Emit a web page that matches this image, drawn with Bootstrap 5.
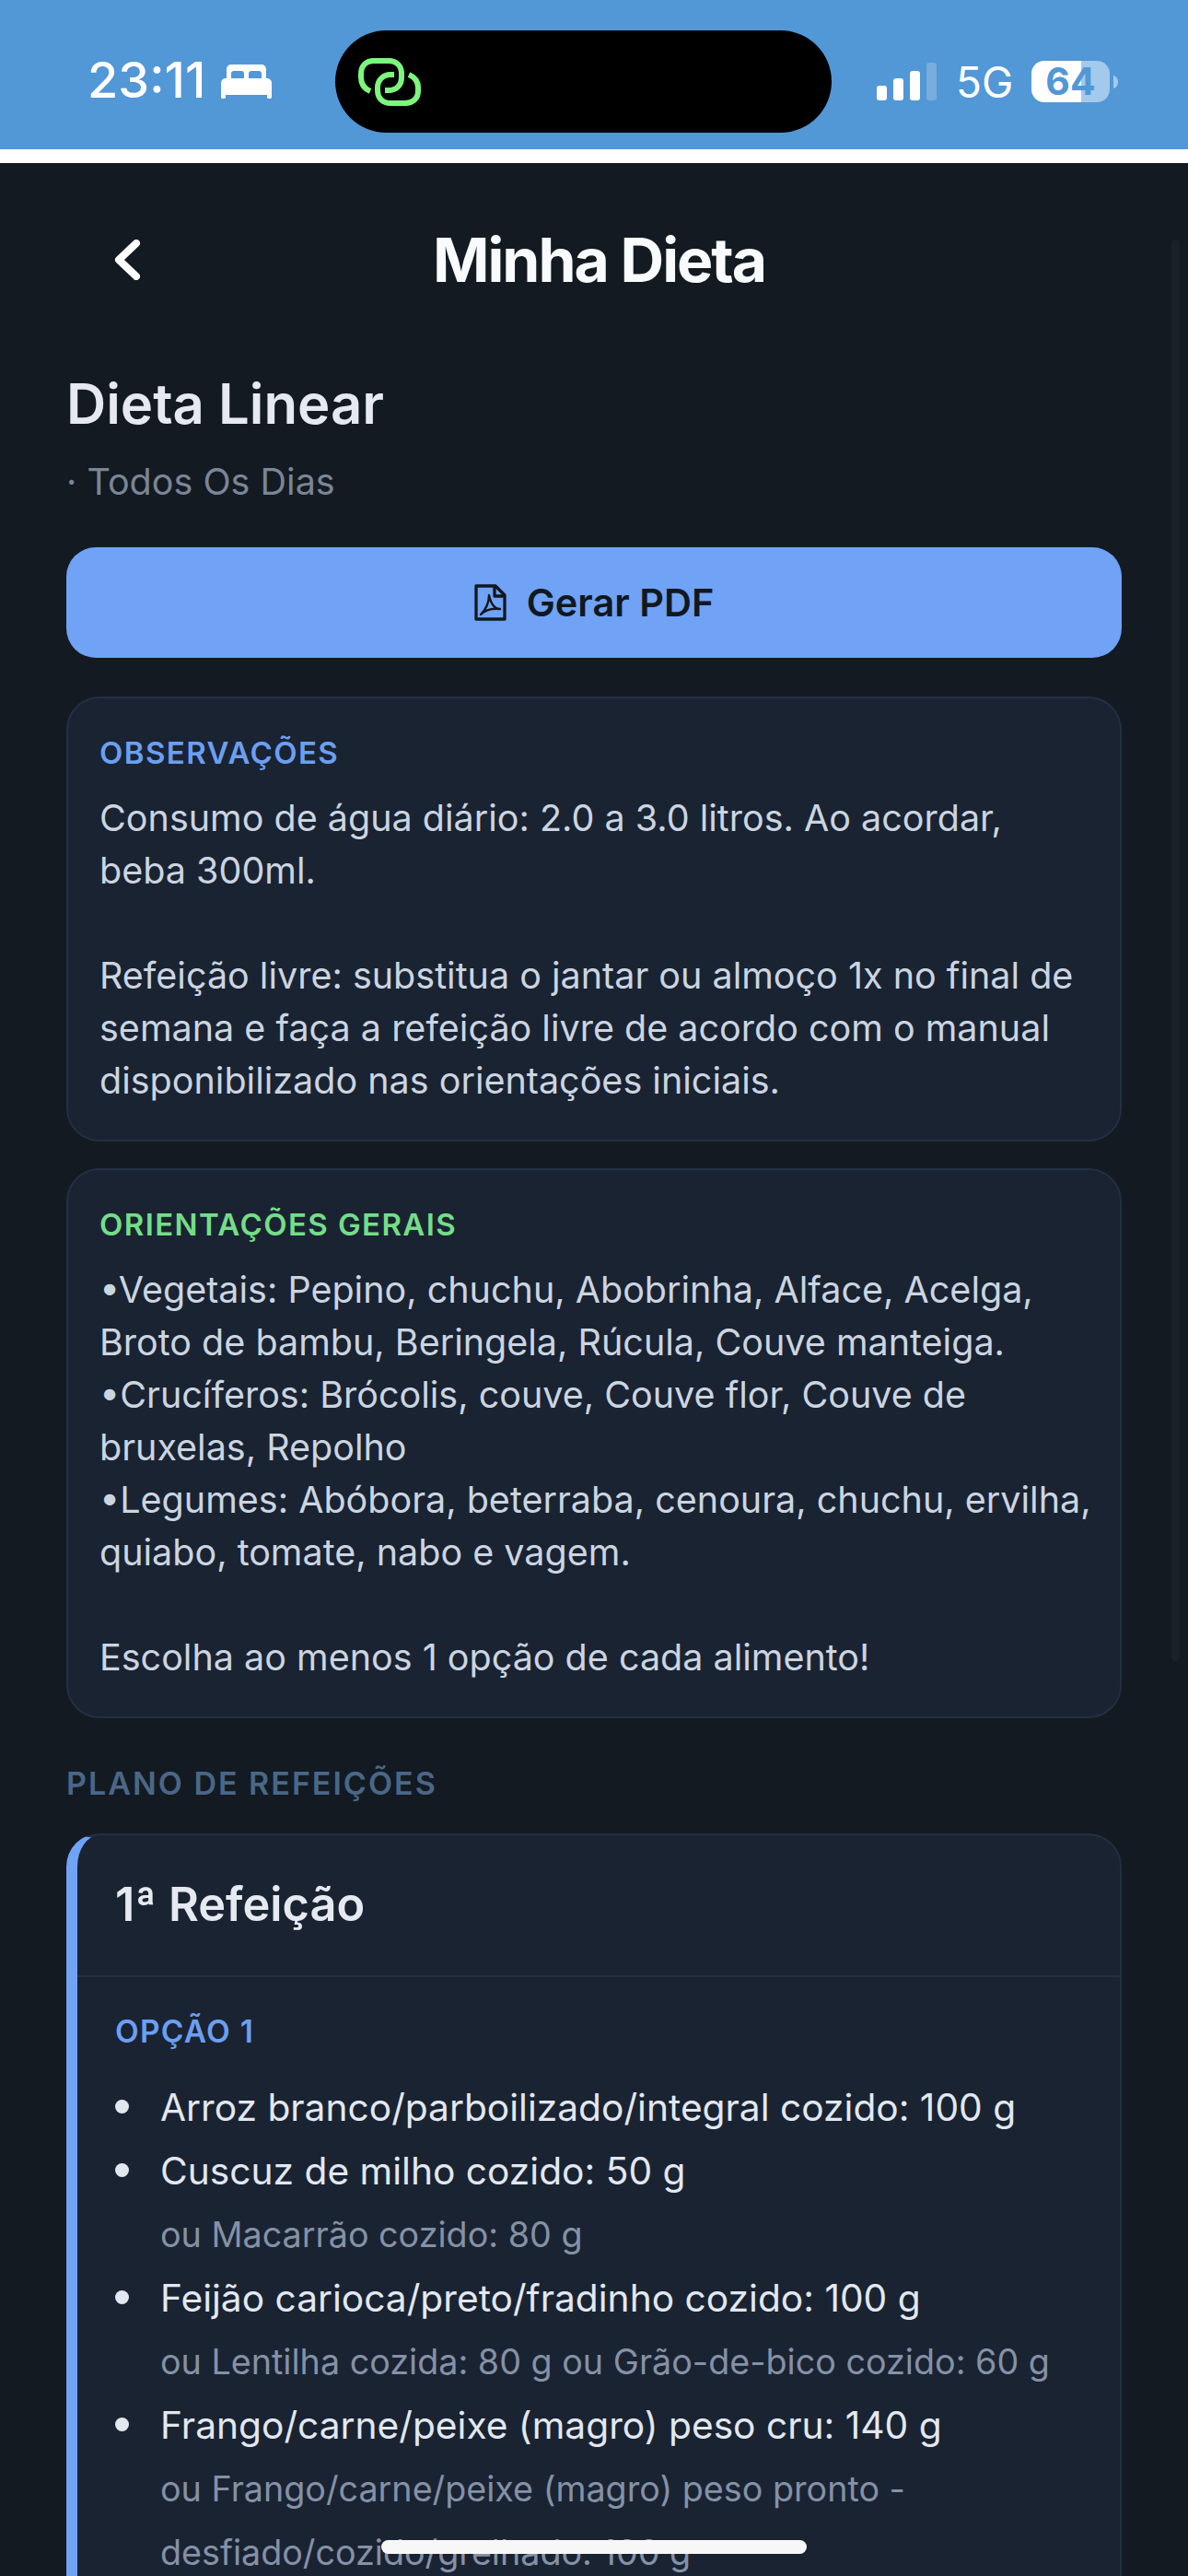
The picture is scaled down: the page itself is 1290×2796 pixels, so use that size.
<!DOCTYPE html>
<html lang="pt-BR">
<head>
    <meta charset="UTF-8">
    <meta name="viewport" content="width=device-width, initial-scale=1.0">
    <title>Minha Dieta</title>
    <link href="https://cdn.jsdelivr.net/npm/bootstrap@5.3.0/dist/css/bootstrap.min.css" rel="stylesheet">
    <script src="https://cdn.jsdelivr.net/npm/bootstrap@5.3.0/dist/js/bootstrap.bundle.min.js"></script>
    <style>
        html, body {
            height: 2796px;
            overflow: hidden;
        }
        body {
            background-color: #131a22;
            font-family: "Inter", "Liberation Sans", sans-serif;
            color: #e2e8f0;
        }
        .status-bar {
            height: 162px;
            background-color: #5297d6;
            color: #fff;
            padding-left: 95px;
            padding-top: 15px;
        }
        .status-time {
            font-size: 54px;
            font-weight: 500;
            line-height: 1;
            width: 145px;
            margin-bottom: 3px;
        }
        .island {
            width: 539px;
            height: 111px;
            border-radius: 56px;
            background-color: #000;
            margin-left: 69px;
            margin-right: 49px;
            padding-left: 25px;
        }
        .status-net {
            font-size: 46px;
            line-height: 1;
            width: 56px;
            margin-left: 21px;
            margin-right: 26px;
            white-space: nowrap;
        }
        .batt-cell {
            width: 85px;
            height: 45px;
            border-radius: 14px;
            background: linear-gradient(90deg, #fff 63.500%, #a3c9ec 63.500%);
            color: #5297d6;
            font-size: 41px;
            font-weight: 700;
            line-height: 45px;
            text-align: center;
        }
        .white-strip {
            height: 15px;
            background-color: #fff;
        }
        .page-head {
            height: 210px;
            padding-left: 124px;
        }
        .page-title {
            font-size: 66px;
            font-weight: 700;
            letter-spacing: -2px;
            color: #f8fafb;
            margin: 0 0 0 318px;
            line-height: 1;
        }
        .page-wrap {
            padding: 0 72px;
        }
        .diet-name {
            font-size: 59.800px;
            font-weight: 600;
            color: #e6eaf0;
            line-height: 71px;
            margin: 16px 0 0;
        }
        .diet-days {
            font-size: 39.500px;
            color: #7a8696;
            line-height: 59px;
            margin: 20px 0 41px;
        }
        .pdf-btn {
            height: 120px;
            border-radius: 32px;
            border: 0;
            background-color: #70a2f5;
            color: #11181f;
            font-size: 41.500px;
            font-weight: 600;
            gap: 22px;
        }
        .note-box {
            background-color: #1a2332;
            border: 2px solid #232f42;
            border-radius: 36px;
            padding: 35px 30px 35px 34px;
            margin-top: 29px;
        }
        .note-box.first-box {
            margin-top: 42px;
        }
        .note-label {
            font-size: 33px;
            font-weight: 600;
            letter-spacing: 1.400px;
            line-height: 48px;
            margin-bottom: 19px;
        }
        .note-text {
            font-size: 39.500px;
            line-height: 57px;
            color: #cbd5e0;
            margin: 0;
            white-space: pre-line;
        }
        .label-blue {
            color: #6b9ff0;
        }
        .label-green {
            color: #74dd88;
        }
        .plan-label {
            font-size: 34px;
            font-weight: 600;
            letter-spacing: 2px;
            color: #4a6787;
            line-height: 51px;
            margin: 45px 0 29px;
        }
        .meal-card {
            background-color: #1a2332;
            border: 2px solid #232f42;
            border-left: 12px solid #70a2f5;
            border-radius: 36px;
        }
        .meal-head {
            padding: 0 41px 3px;
            height: 154px;
            font-size: 50.500px;
            font-weight: 600;
            color: #e6eaf0;
            background: transparent;
            border-bottom: 2px solid #232f42;
        }
        .meal-body {
            padding: 34px 41px 44px;
        }
        .option-label {
            font-size: 33.500px;
            font-weight: 600;
            color: #6b9ff0;
            letter-spacing: 1.200px;
            line-height: 50px;
            margin-bottom: 23px;
        }
        .food-list {
            list-style: none;
            padding-left: 49px;
            margin: 0;
            font-size: 40.700px;
            line-height: 69px;
            color: #e2e8f0;
        }
        .food-list li {
            position: relative;
        }
        .food-list li::before {
            content: "";
            position: absolute;
            left: -49px;
            top: 26px;
            width: 15px;
            height: 15px;
            border-radius: 50%;
            background-color: #e2e8f0;
        }
        .food-alt {
            font-size: 37.700px;
            line-height: 69px;
            color: #8591a6;
        }
        .scroll-track {
            position: fixed;
            left: 1272px;
            top: 260px;
            width: 9px;
            height: 1543px;
            border-radius: 5px;
            background-color: #1a212b;
        }
        .home-bar {
            position: fixed;
            left: 414px;
            top: 2757px;
            width: 462px;
            height: 15px;
            border-radius: 8px;
            background-color: #f7f7f7;
        }
    </style>
</head>
<body>
    <div class="status-bar d-flex align-items-center">
        <div class="status-time">23:11</div>
        <svg width="55" height="37" viewBox="0 0 55 37" fill="#fff">
            <path d="M11 0h33a5 5 0 0 1 5 5v10h-5v-5a3 3 0 0 0-3-3H33a3 3 0 0 0-3 3v5h-5v-5a3 3 0 0 0-3-3H14a3 3 0 0 0-3 3v5H6V5a5 5 0 0 1 5-5z"/>
            <path d="M5 15h45a5 5 0 0 1 5 5v15.500a1.500 1.500 0 0 1-1.500 1.500h-2a1.500 1.500 0 0 1-1.500-1.500V33H5v2.500A1.500 1.500 0 0 1 3.500 37h-2A1.500 1.500 0 0 1 0 35.500V20a5 5 0 0 1 5-5z"/>
        </svg>
        <div class="island d-flex align-items-center">
            <svg width="68" height="52" viewBox="0 0 68 52" fill="none" stroke="#7cf77e" stroke-width="6">
                <path d="M13 36C6 33 3 28 3 21V17C3 8 9 3 17 3H33C42 3 47 9 47 17V21C47 30 41 35 33 35H29"/>
                <path d="M39 18H35C27 18 21 24 21 32V35C21 44 27 49 35 49H51C59 49 65 44 65 36V32C65 26 62 21 55 18"/>
            </svg>
        </div>
        <svg width="65" height="41" viewBox="0 0 65 41" fill="#fff">
            <rect x="0" y="25" width="11" height="16" rx="3"/>
            <rect x="18" y="17" width="11" height="24" rx="3"/>
            <rect x="36" y="9" width="11" height="32" rx="3"/>
            <rect x="54" y="0" width="11" height="41" rx="3" opacity=".22"/>
        </svg>
        <div class="status-net">5G</div>
        <div class="batt-cell">64</div>
        <svg class="ms-1" width="5" height="14" viewBox="0 0 5 14" fill="#a3c9ec">
            <path d="M0 0c3 1 5 3 5 7s-2 6-5 7z"/>
        </svg>
    </div>
    <div class="white-strip"></div>

    <div class="page-head d-flex align-items-center">
        <svg width="28" height="44" viewBox="0 0 28 44" fill="none" stroke="#fff" stroke-width="8" stroke-linejoin="round" stroke-linecap="round">
            <path d="M24 4L5 22l19 18"/>
        </svg>
        <h1 class="page-title">Minha Dieta</h1>
    </div>

    <div class="page-wrap">
        <h2 class="diet-name">Dieta Linear</h2>
        <p class="diet-days">· Todos Os Dias</p>

        <button class="btn pdf-btn w-100 d-flex align-items-center justify-content-center">
            <svg width="35" height="40" viewBox="0 0 35 40" fill="none" stroke="#11181f" stroke-width="3.300" stroke-linejoin="round">
                <path d="M2 2h21l10 10v26H2z"/>
                <path d="M22 2v11h11"/>
                <path d="M16 12c0 8-3 15-9 21 5-5 13-7 21-6-6 0-10-6-12-15z" stroke-width="2.400"/>
            </svg>
            Gerar PDF
        </button>

        <div class="note-box first-box">
            <div class="note-label label-blue">OBSERVAÇÕES</div>
            <p class="note-text">Consumo de água diário: 2.0 a 3.0 litros. Ao acordar, beba 300ml.

Refeição livre: substitua o jantar ou almoço 1x no final de semana e faça a refeição livre de acordo com o manual disponibilizado nas orientações iniciais.</p>
        </div>

        <div class="note-box">
            <div class="note-label label-green">ORIENTAÇÕES GERAIS</div>
            <p class="note-text">•Vegetais: Pepino, chuchu, Abobrinha, Alface, Acelga, Broto de bambu, Beringela, Rúcula, Couve manteiga.
•Crucíferos: Brócolis, couve, Couve flor, Couve de bruxelas, Repolho
•Legumes: Abóbora, beterraba, cenoura, chuchu, ervilha, quiabo, tomate, nabo e vagem.

Escolha ao menos 1 opção de cada alimento!</p>
        </div>

        <div class="plan-label">PLANO DE REFEIÇÕES</div>

        <div class="card meal-card">
            <div class="card-header meal-head d-flex align-items-center">1ª Refeição</div>
            <div class="card-body meal-body">
                <div class="option-label">OPÇÃO 1</div>
                <ul class="food-list">
                    <li>Arroz branco/parboilizado/integral cozido: 100 g</li>
                    <li>Cuscuz de milho cozido: 50 g
                        <div class="food-alt">ou Macarrão cozido: 80 g</div>
                    </li>
                    <li>Feijão carioca/preto/fradinho cozido: 100 g
                        <div class="food-alt">ou Lentilha cozida: 80 g ou Grão-de-bico cozido: 60 g</div>
                    </li>
                    <li>Frango/carne/peixe (magro) peso cru: 140 g
                        <div class="food-alt">ou Frango/carne/peixe (magro) peso pronto - desfiado/cozido/grelhado: 100 g</div>
                    </li>
                </ul>
            </div>
        </div>
    </div>

    <div class="scroll-track"></div>
    <div class="home-bar"></div>
</body>
</html>
